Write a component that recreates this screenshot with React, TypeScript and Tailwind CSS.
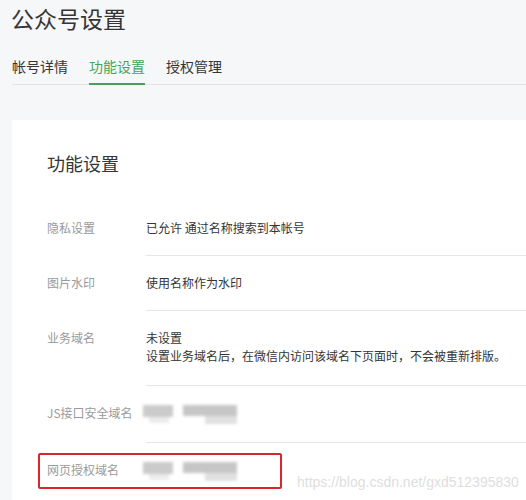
const FONT = { fontFamily: '"Noto Sans CJK SC", "Noto Sans", sans-serif' };

type Row = { label: string; lines?: string[]; blurred?: boolean; highlight?: boolean };

const ROWS: Row[] = [
  { label: '隐私设置', lines: ['已允许 通过名称搜索到本帐号'] },
  { label: '图片水印', lines: ['使用名称作为水印'] },
  { label: '业务域名', lines: ['未设置', '设置业务域名后，在微信内访问该域名下页面时，不会被重新排版。'] },
  { label: 'JS接口安全域名', blurred: true },
  { label: '网页授权域名', blurred: true, highlight: true },
];

// masked domain value
function Blurred() {
  return (
    <div className="-ml-[3px] flex h-[20px] gap-[10px] pt-px blur-[1.5px]">
      <div className="flex flex-col">
        <div className="h-[12px] w-[30px] bg-[#cbcbcb]" />
        <div className="ml-[6px] h-[6px] w-[20px] bg-[#ececec]" />
      </div>
      <div className="flex flex-col items-end">
        <div className="h-[11px] w-[54px] bg-[#c6c6c6]" />
        <div className="h-[8px] w-[32px] bg-[#e0e0e0]" />
      </div>
    </div>
  );
}

export default function App() {
  return (
    <div className="relative h-[500px] w-[526px] overflow-hidden bg-[#f6f7f9] text-[#353535]" style={FONT}>
      <h1 className="pl-[11px] pt-[2px] text-[23px] leading-[32px] font-normal">公众号设置</h1>

      <div className="ml-3 mt-[22px] flex gap-[21px] border-b border-[#e1e3e6] text-[14px] leading-[20px]">
        <div className="pb-[8px]">帐号详情</div>
        <div className="-mb-px border-b-2 border-[#4a9f5c] pb-[7px] text-[#44a55a]">功能设置</div>
        <div className="pb-[8px]">授权管理</div>
      </div>

      <div className="ml-3 mt-[35px] bg-white pl-[35px] pt-[31px] pb-10">
        <h2 className="text-[18px] leading-[24px] font-normal">功能设置</h2>
        <div className="mt-[26px] text-[12px] leading-[18px]">
          {ROWS.map((row, i) => (
            <div key={row.label} className="relative flex">
              {row.highlight && (
                <div className="absolute -left-[9px] top-[10px] h-[36px] w-[244px] rounded-[2px] border-2 border-[#d8262c]" />
              )}
              <div className="w-[99px] shrink-0 py-[18px] text-[#9a9a9a]">{row.label}</div>
              <div className={`flex-1 py-[18px] ${i < ROWS.length - 1 ? 'border-b border-[#e7e7eb]' : ''} ${row.lines && row.lines.length > 1 ? 'pb-[20px]' : ''}`}>
                {row.blurred ? <Blurred /> : row.lines?.map((l) => <div key={l}>{l}</div>)}
              </div>
            </div>
          ))}
        </div>
      </div>

      <div className="absolute left-[297px] top-[473px] text-[14px] leading-[18px] text-[#dedede]" style={{ fontFamily: '"Liberation Sans", Arial, sans-serif' }}>
        https://blog.csdn.net/gxd512395830
      </div>
    </div>
  );
}
